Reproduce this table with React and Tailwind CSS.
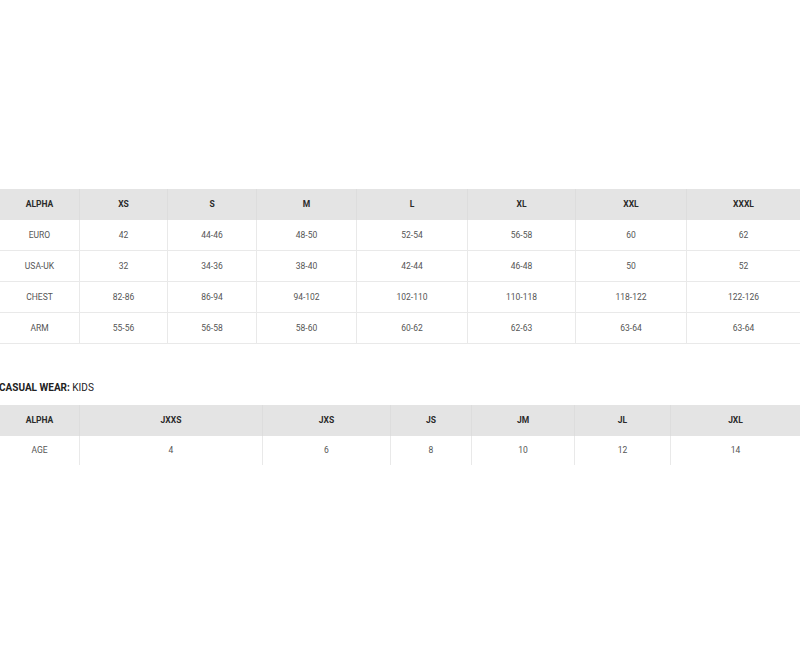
const adults = {
  widths: [80, 88, 89, 100, 111, 108, 111, 113],
  head: ["ALPHA", "XS", "S", "M", "L", "XL", "XXL", "XXXL"],
  rows: [
    ["EURO", "42", "44-46", "48-50", "52-54", "56-58", "60", "62"],
    ["USA-UK", "32", "34-36", "38-40", "42-44", "46-48", "50", "52"],
    ["CHEST", "82-86", "86-94", "94-102", "102-110", "110-118", "118-122", "122-126"],
    ["ARM", "55-56", "56-58", "58-60", "60-62", "62-63", "63-64", "63-64"],
  ],
};

const kids = {
  widths: [80, 183, 128, 81, 103, 96, 129],
  head: ["ALPHA", "JXXS", "JXS", "JS", "JM", "JL", "JXL"],
  rows: [["AGE", "4", "6", "8", "10", "12", "14"]],
};

const SizeTable = ({ data, lastBorder = true }) => {
  return (
    <div className="w-[800px]">
      <div className="flex h-[31px] bg-[#e4e4e4]">
        {data.head.map((h, i) => (
          <div
            key={h}
            style={{ width: data.widths[i] }}
            className={`flex items-center justify-center font-bold text-[8.5px] text-[#2a2a2a] ${
              i < data.head.length - 1 ? "border-r border-[#dddddd]" : ""
            }`}
          >
            {h}
          </div>
        ))}
      </div>
      {data.rows.map((row, r) => (
        <div
          key={r}
          className={
            lastBorder || r < data.rows.length - 1
              ? "flex h-[31px] border-b border-[#e9e9e9]"
              : "flex h-[29px]"
          }
        >
          {row.map((cell, i) => (
            <div
              key={i}
              style={{ width: data.widths[i] }}
              className={`flex items-center justify-center text-[8.5px] text-[#555555] ${
                i < row.length - 1 ? "border-r border-[#e9e9e9]" : ""
              }`}
            >
              {cell}
            </div>
          ))}
        </div>
      ))}
    </div>
  );
};

export default function App() {
  return (
    <div className="w-[800px] h-[655px] overflow-hidden bg-white pt-[189px] font-['Roboto',sans-serif]">
      <SizeTable data={adults} />
      <h3 className="mt-[36px] mb-[9px] ml-[-1px] h-[16px] leading-[16px] text-[10px] text-[#222222]">
        <span className="font-bold">CASUAL WEAR:</span> KIDS
      </h3>
      <SizeTable data={kids} lastBorder={false} />
    </div>
  );
}
